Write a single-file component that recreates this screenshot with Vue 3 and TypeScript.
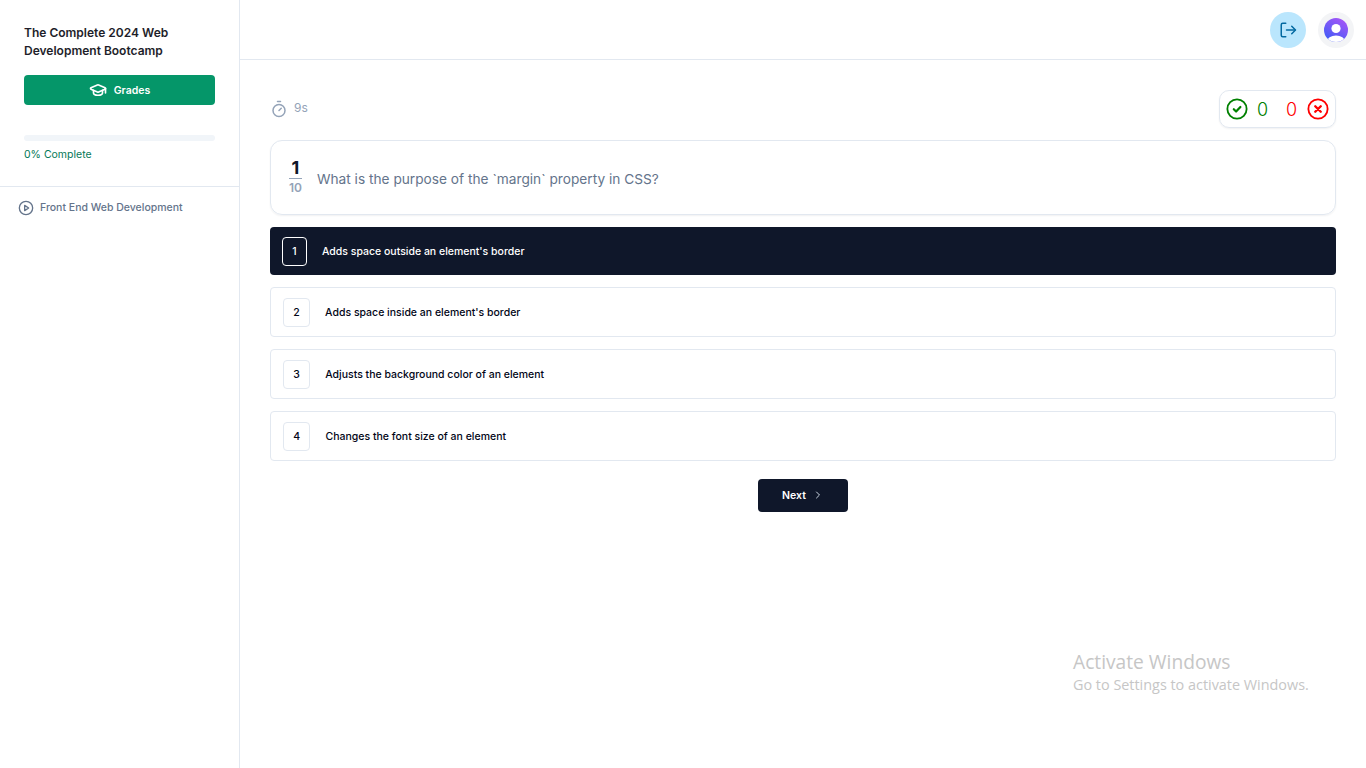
<script setup lang="ts">
interface Option { n: number; text: string; active?: boolean }
const options: Option[] = [
  { n: 1, text: "Adds space outside an element's border", active: true },
  { n: 2, text: "Adds space inside an element's border" },
  { n: 3, text: 'Adjusts the background color of an element' },
  { n: 4, text: 'Changes the font size of an element' },
]
</script>

<template>
  <div class="app">
    <aside class="sidebar">
      <div class="side-top">
        <h1 class="course">The Complete 2024 Web Development Bootcamp</h1>
        <button class="grades">
          <svg width="18" height="18" viewBox="0 0 24 24" fill="none" stroke="currentColor" stroke-width="2.2" stroke-linecap="round" stroke-linejoin="round">
            <path d="M21.42 10.92a1 1 0 0 0 0-1.84L12.83 5.18a2 2 0 0 0-1.66 0L2.6 9.08a1 1 0 0 0 0 1.83l8.57 3.91a2 2 0 0 0 1.66 0z" />
            <path d="M22 10v6" />
            <path d="M6 12.5V16a6 3 0 0 0 12 0v-3.5" />
          </svg>
          <span>Grades</span>
        </button>
        <div class="progress"></div>
        <div class="complete">0% Complete</div>
      </div>
      <div class="chapter">
        <svg width="16" height="16" viewBox="0 0 24 24" fill="none" stroke="currentColor" stroke-width="2" stroke-linecap="round" stroke-linejoin="round">
          <circle cx="12" cy="12" r="10" />
          <polygon points="10 8 16 12 10 16 10 8" />
        </svg>
        <span>Front End Web Development</span>
      </div>
    </aside>

    <div class="content">
      <header class="topbar">
        <button class="logout">
          <svg width="18" height="18" viewBox="0 0 24 24" fill="none" stroke="currentColor" stroke-width="2" stroke-linecap="round" stroke-linejoin="round">
            <path d="M9 3H5a2 2 0 0 0-2 2v14a2 2 0 0 0 2 2h4" />
            <path d="M10 12h11" />
            <path d="M17 7l5 5-5 5" />
          </svg>
        </button>
        <div class="avatar-wrap">
          <svg width="24" height="24" viewBox="0 0 24 24">
            <defs>
              <linearGradient id="avatarGrad" x1="0.8" y1="0" x2="0.2" y2="1">
                <stop offset="0" stop-color="#a855f7" />
                <stop offset="1" stop-color="#3b5bf6" />
              </linearGradient>
              <clipPath id="avatarClip"><circle cx="12" cy="12" r="12" /></clipPath>
            </defs>
            <g clip-path="url(#avatarClip)">
              <rect width="24" height="24" fill="url(#avatarGrad)" />
              <circle cx="12" cy="10.5" r="4.6" fill="#fff" />
              <ellipse cx="12" cy="23.5" rx="9" ry="6" fill="#fff" />
            </g>
          </svg>
        </div>
      </header>

      <main class="main">
        <div class="status">
          <div class="timer">
            <svg width="18" height="18" viewBox="0 0 24 24" fill="none" stroke="currentColor" stroke-width="2" stroke-linecap="round" stroke-linejoin="round">
              <line x1="10" y1="2" x2="14" y2="2" />
              <line x1="12" y1="14" x2="15" y2="11" />
              <circle cx="12" cy="14" r="8" />
            </svg>
            <span>9s</span>
          </div>
          <div class="score">
            <svg width="22" height="22" viewBox="0 0 24 24" fill="none" stroke="#008000" stroke-width="2" stroke-linecap="round" stroke-linejoin="round">
              <circle cx="12" cy="12" r="10.5" />
              <path d="M8.5 12.3l2.5 2.5 4.7-5" stroke-width="2.4" />
            </svg>
            <span class="good">0</span>
            <span class="bad">0</span>
            <svg width="22" height="22" viewBox="0 0 24 24" fill="none" stroke="#ff0000" stroke-width="2" stroke-linecap="round" stroke-linejoin="round">
              <circle cx="12" cy="12" r="10.5" />
              <path d="M9 9l6 6M15 9l-6 6" stroke-width="2.6" />
            </svg>
          </div>
        </div>

        <section class="question">
          <div class="fraction">
            <span class="num">1</span>
            <span class="den">10</span>
          </div>
          <p class="qtext">What is the purpose of the `margin` property in CSS?</p>
        </section>

        <div class="options">
          <div v-for="o in options" :key="o.n" class="option" :class="{ active: o.active }">
            <span class="badge">{{ o.n }}</span>
            <span class="otext">{{ o.text }}</span>
          </div>
        </div>

        <div class="actions">
          <button class="next">
            <span>Next</span>
            <svg width="12" height="12" viewBox="0 0 24 24" fill="none" stroke="currentColor" stroke-width="2" stroke-linecap="round" stroke-linejoin="round">
              <path d="M9 18l6-6-6-6" />
            </svg>
          </button>
        </div>
      </main>
    </div>

    <div class="watermark">
      <div class="wm-title">Activate Windows</div>
      <div class="wm-sub">Go to Settings to activate Windows.</div>
    </div>
  </div>
</template>

<style>
html, body { margin: 0; background: #fff; }
</style>

<style scoped>
* { box-sizing: border-box; }
.app {
  display: flex;
  position: relative;
  width: 1366px;
  height: 768px;
  overflow: hidden;
  background: #fff;
  font-family: Inter, "Liberation Sans", sans-serif;
  color: #0f172a;
}
.sidebar {
  width: 240px;
  flex: none;
  border-right: 1px solid #e2e8f0;
}
.side-top {
  padding: 24px 24px 0;
  height: 187px;
  border-bottom: 1px solid #e2e8f0;
}
.course {
  margin: 0;
  font-size: 12px;
  line-height: 18px;
  font-weight: 600;
  color: #1e1e2a;
}
.grades {
  display: flex;
  align-items: center;
  justify-content: center;
  gap: 7px;
  width: 191px;
  height: 30px;
  margin-top: 15px;
  border: 0;
  border-radius: 4px;
  background: #059669;
  color: #fff;
  font: 600 10.5px Inter, sans-serif;
}
.progress {
  height: 6px;
  margin-top: 30px;
  border-radius: 4px;
  background: #f1f5f9;
}
.complete {
  margin-top: 7px;
  font-size: 10.5px;
  line-height: 14px;
  font-weight: 400;
  color: #047857;
}
.chapter {
  display: flex;
  align-items: center;
  gap: 6px;
  padding: 13px 0 0 18px;
  font-size: 10.5px;
  line-height: 16px;
  font-weight: 500;
  color: #64748b;
}
.content {
  flex: 1;
  min-width: 0;
}
.topbar {
  display: flex;
  align-items: center;
  justify-content: flex-end;
  gap: 12px;
  height: 60px;
  padding-right: 12px;
  border-bottom: 1px solid #e2e8f0;
}
.logout {
  display: flex;
  align-items: center;
  justify-content: center;
  width: 36px;
  height: 36px;
  padding: 0;
  border: 0;
  border-radius: 50%;
  background: #bae6fd;
  color: #0369a1;
}
.avatar-wrap {
  display: flex;
  align-items: center;
  justify-content: center;
  width: 36px;
  height: 36px;
  border-radius: 50%;
  background: #f3f4f6;
}
.main {
  padding: 30px 30px 0;
}
.status {
  display: flex;
  align-items: center;
  justify-content: space-between;
  height: 38px;
}
.timer {
  display: flex;
  align-items: center;
  gap: 6px;
  margin-top: -4px;
  font-size: 12px;
  font-weight: 400;
  color: #94a3b8;
}
.timer svg { color: #94a3b8; margin-top: 4px; }
.score {
  display: flex;
  align-items: center;
  width: 117px;
  height: 38px;
  padding: 0 6px;
  border: 1px solid #e2e8f0;
  border-radius: 10px;
  box-shadow: 0 1px 2px rgba(15, 23, 42, 0.06);
  font-size: 18px;
}
.good { margin-left: 9px; color: #008000; font-weight: 300; }
.bad { margin-left: auto; margin-right: 10px; color: #ff0000; font-weight: 300; }
.question {
  display: flex;
  align-items: center;
  gap: 15px;
  height: 75px;
  margin-top: 12px;
  padding: 0 18px;
  border: 1px solid #e2e8f0;
  border-radius: 12px;
  box-shadow: 0 1px 2px rgba(15, 23, 42, 0.06);
}
.fraction {
  display: flex;
  flex-direction: column;
  align-items: center;
  width: 13px;
  margin-top: -1px;
}
.num {
  width: 100%;
  text-align: center;
  font-size: 18px;
  line-height: 20px;
  font-weight: 700;
  color: #0f172a;
  border-bottom: 1px solid #94a3b8;
}
.den {
  font-size: 12px;
  line-height: 17px;
  font-weight: 600;
  color: #94a3b8;
}
.qtext {
  margin: 2px 0 0;
  font-size: 13.7px;
  line-height: 20px;
  color: #64748b;
}
.options {
  display: flex;
  flex-direction: column;
  gap: 12px;
  margin-top: 12px;
}
.option {
  display: flex;
  align-items: center;
  gap: 15px;
  height: 50px;
  padding: 0 12px;
  border: 1px solid #e2e8f0;
  border-radius: 4px;
  font-size: 10.5px;
  font-weight: 500;
  color: #020617;
}
.option.active {
  height: 48px;
  border: 0;
  background: #0f172a;
  color: #fff;
}
.badge {
  display: flex;
  align-items: center;
  justify-content: center;
  height: 29px;
  padding: 0 9.3px;
  border: 1px solid #e2e8f0;
  border-radius: 4px;
  font-size: 10.5px;
  font-weight: 500;
}
.option.active .badge {
  border-color: #fff;
}
.actions {
  display: flex;
  justify-content: center;
  margin-top: 18px;
}
.next {
  display: flex;
  align-items: center;
  justify-content: center;
  gap: 6px;
  width: 90px;
  height: 33px;
  padding: 0 0 1px 0;
  border: 0;
  border-radius: 4px;
  background: #0f172a;
  color: #fff;
  font: 600 10.5px Inter, sans-serif;
}
.next svg { color: #cbd5e1; }
.watermark {
  position: absolute;
  left: 1073px;
  top: 649px;
  font-family: "Open Sans", sans-serif;
  color: #c6c6c6;
}
.wm-title { font-size: 19.2px; line-height: 26px; }
.wm-sub { font-size: 14.4px; line-height: 20px; }
</style>
